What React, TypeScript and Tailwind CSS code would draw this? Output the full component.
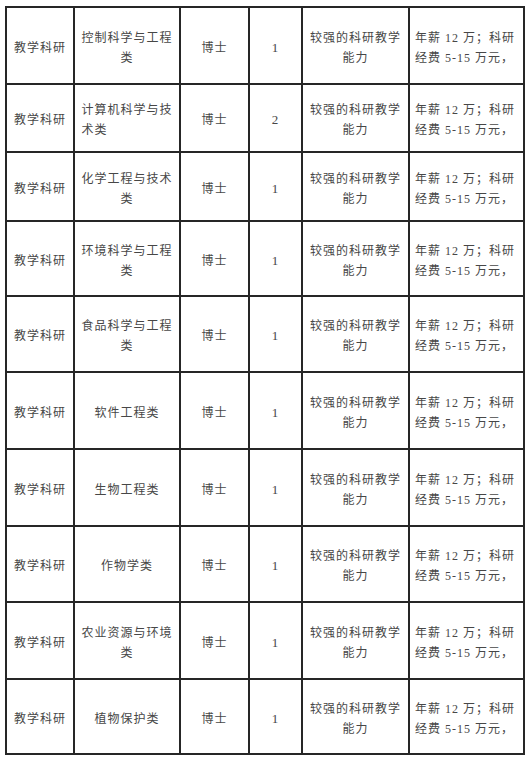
import React from 'react';

interface Row {
  major: string[];
  count: string;
  leftWrap?: boolean;
}

const rows: Row[] = [
  { major: ['控制科学与工程', '类'], count: '1' },
  { major: ['计算机科学与技', '术类'], count: '2', leftWrap: true },
  { major: ['化学工程与技术', '类'], count: '1' },
  { major: ['环境科学与工程', '类'], count: '1' },
  { major: ['食品科学与工程', '类'], count: '1' },
  { major: ['软件工程类'], count: '1' },
  { major: ['生物工程类'], count: '1' },
  { major: ['作物学类'], count: '1' },
  { major: ['农业资源与环境', '类'], count: '1' },
  { major: ['植物保护类'], count: '1' },
];

const cell = 'bg-white flex items-center justify-center text-center pt-[4px]';

const App = () => {
  return (
    <div
      className="min-h-[762px] w-[528px] bg-white pt-[6px] pl-[5px] text-[12px] leading-[20px] tracking-[1px] text-[#474747]"
      style={{ fontFamily: '"Liberation Serif", "Noto Sans CJK SC", serif' }}
    >
      <div className="grid w-[520px] grid-cols-[66px_104px_67px_51px_105px_113px] grid-rows-[75px_66px_67px_73px_74px_75px_75px_74px_75px_73px] gap-[2px] border-2 border-[#262626] bg-[#262626]">
        {rows.map((row, i) => (
          <React.Fragment key={i}>
            <div className={cell}>教学科研</div>
            <div className={cell}>
              {row.leftWrap ? (
                <div className="text-left">
                  {row.major[0]}
                  <br />
                  {row.major[1]}
                </div>
              ) : (
                <div>
                  {row.major.map((line, j) => (
                    <div key={j}>{line}</div>
                  ))}
                </div>
              )}
            </div>
            <div className={cell}>博士</div>
            <div className={`${cell} text-[13px]`}>{row.count}</div>
            <div className={cell}>
              <div>
                <div>较强的科研教学</div>
                <div>能力</div>
              </div>
            </div>
            <div className="flex items-center bg-white pl-[5px] pt-[4px] text-left">
              <div>
                <div>年薪 12 万；科研</div>
                <div>经费 5-15 万元，</div>
              </div>
            </div>
          </React.Fragment>
        ))}
      </div>
    </div>
  );
};

export default App;
